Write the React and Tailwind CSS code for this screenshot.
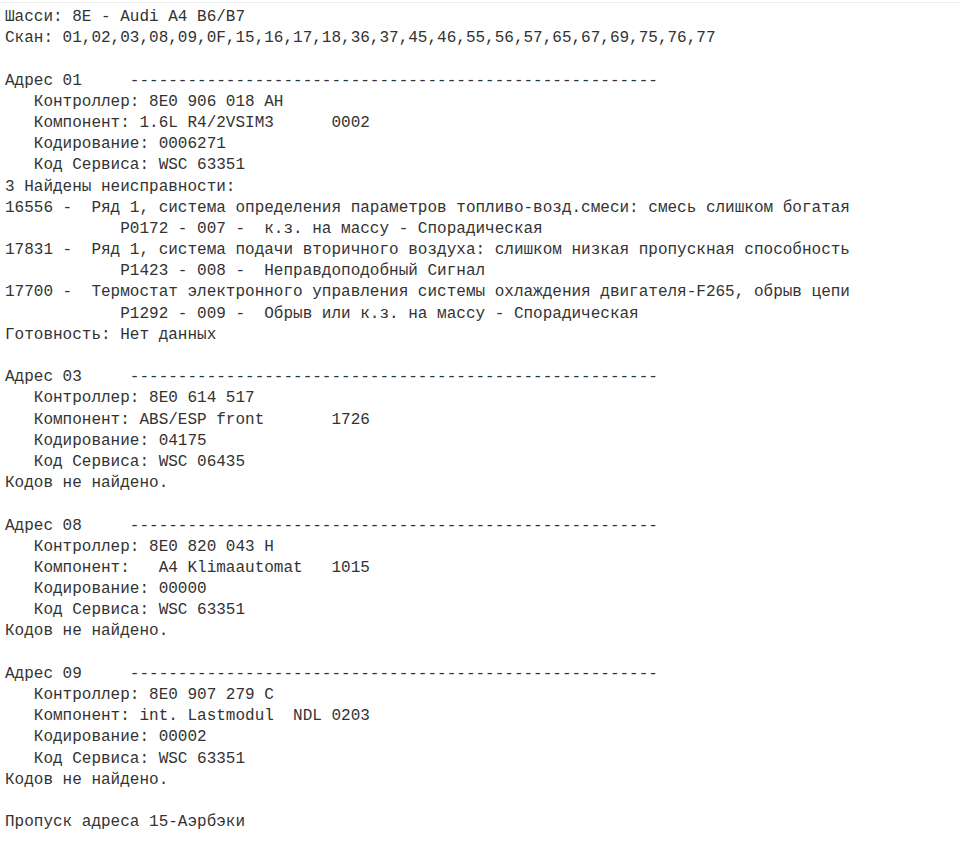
import React from "react";

const dash = "-".repeat(55);

const lines = [
  "Шасси: 8E - Audi A4 B6/B7",
  "Скан: 01,02,03,08,09,0F,15,16,17,18,36,37,45,46,55,56,57,65,67,69,75,76,77",
  "",
  "Адрес 01     " + dash,
  "   Контроллер: 8E0 906 018 AH",
  "   Компонент: 1.6L R4/2VSIM3      0002",
  "   Кодирование: 0006271",
  "   Код Сервиса: WSC 63351",
  "3 Найдены неисправности:",
  "16556 -  Ряд 1, система определения параметров топливо-возд.смеси: смесь слишком богатая",
  "            P0172 - 007 -  к.з. на массу - Спорадическая",
  "17831 -  Ряд 1, система подачи вторичного воздуха: слишком низкая пропускная способность",
  "            P1423 - 008 -  Неправдоподобный Сигнал",
  "17700 -  Термостат электронного управления системы охлаждения двигателя-F265, обрыв цепи",
  "            P1292 - 009 -  Обрыв или к.з. на массу - Спорадическая",
  "Готовность: Нет данных",
  "",
  "Адрес 03     " + dash,
  "   Контроллер: 8E0 614 517",
  "   Компонент: ABS/ESP front       1726",
  "   Кодирование: 04175",
  "   Код Сервиса: WSC 06435",
  "Кодов не найдено.",
  "",
  "Адрес 08     " + dash,
  "   Контроллер: 8E0 820 043 H",
  "   Компонент:   A4 Klimaautomat   1015",
  "   Кодирование: 00000",
  "   Код Сервиса: WSC 63351",
  "Кодов не найдено.",
  "",
  "Адрес 09     " + dash,
  "   Контроллер: 8E0 907 279 C",
  "   Компонент: int. Lastmodul  NDL 0203",
  "   Кодирование: 00002",
  "   Код Сервиса: WSC 63351",
  "Кодов не найдено.",
  "",
  "Пропуск адреса 15-Аэрбэки",
];

export default function App() {
  return (
    <div className="w-[960px] h-[845px] bg-white overflow-hidden">
      <div className="h-[3px] border-b border-[#ececec]" />
      <div
        className="pl-[5px] pt-[4px] text-[16px] leading-[21.2px] text-[#333333] whitespace-pre"
        style={{ fontFamily: '"Liberation Mono", "DejaVu Sans Mono", monospace' }}
      >
        {lines.map((l, i) => (
          <div key={i} className="h-[21.2px]">
            {l === "" ? "\u00a0" : l}
          </div>
        ))}
      </div>
    </div>
  );
}
